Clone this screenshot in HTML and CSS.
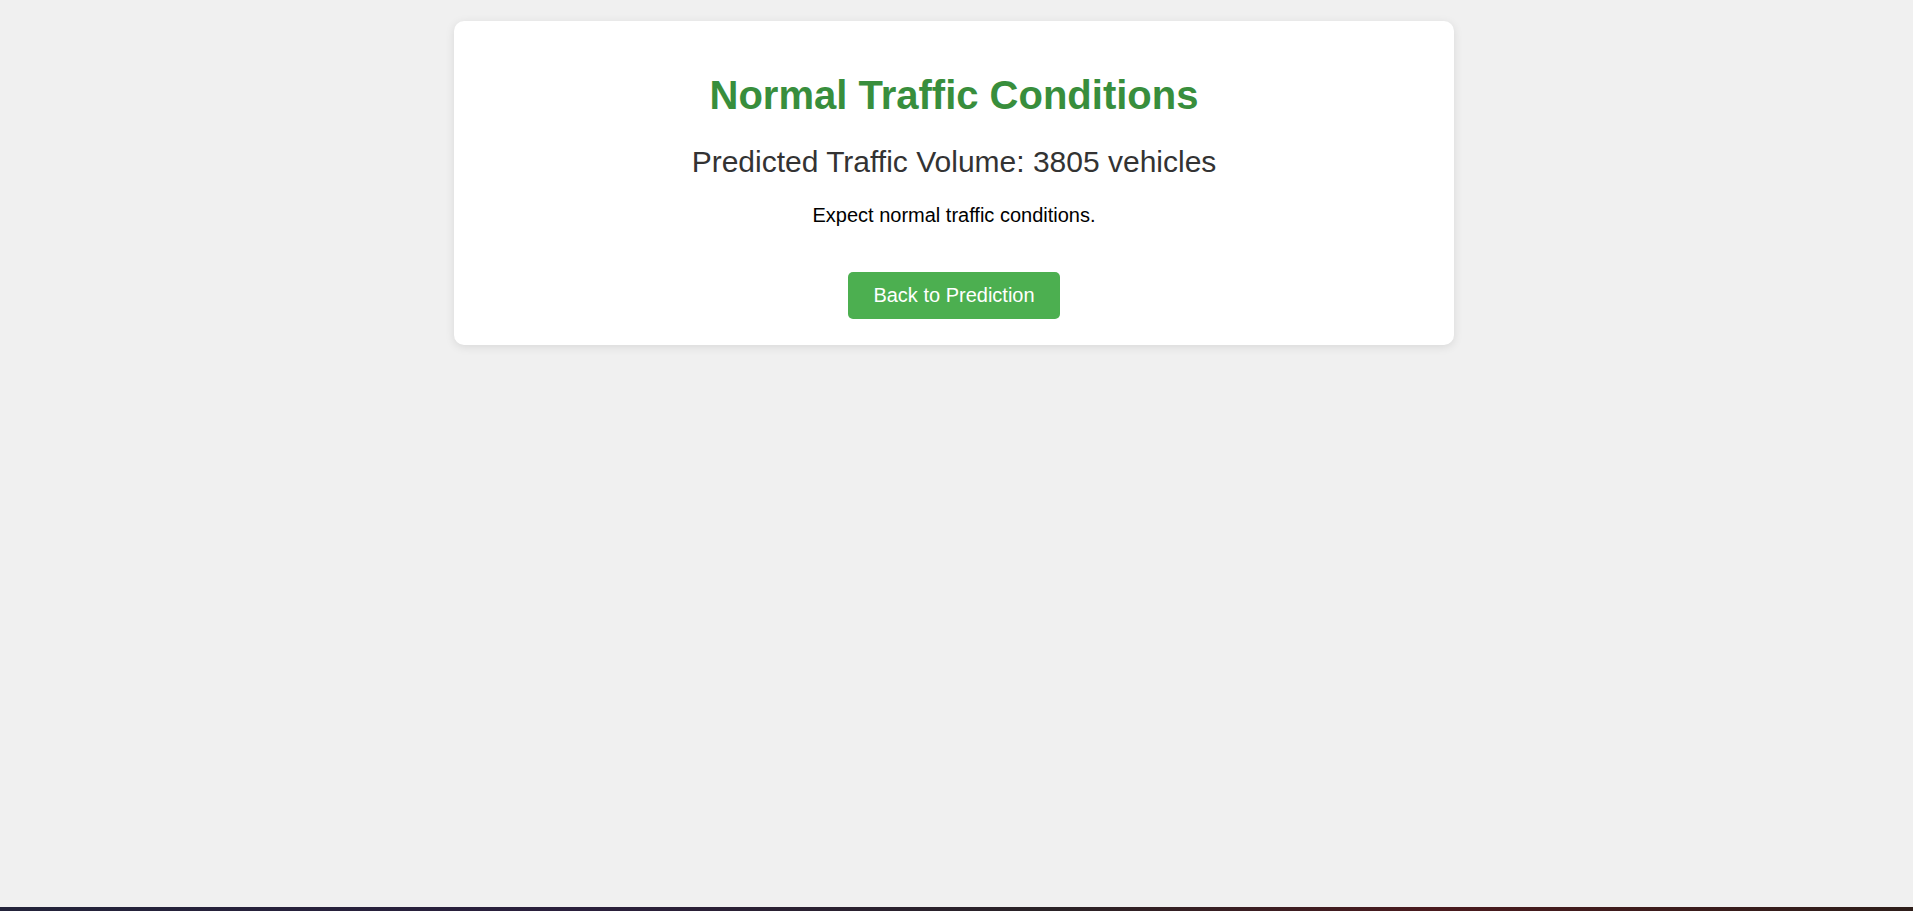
FILE: index.html
```html
<!DOCTYPE html>
<html lang="en">
<head>
<meta charset="utf-8">
<title>Traffic Prediction Result</title>
<link rel="stylesheet" href="styles.css">
</head>
<body>
<div class="page">
  <main class="card">
    <h1 class="title">Normal Traffic Conditions</h1>
    <h2 class="volume">Predicted Traffic Volume: 3805 vehicles</h2>
    <p class="note">Expect normal traffic conditions.</p>
    <a class="btn" href="#">Back to Prediction</a>
  </main>
  <div class="spacer"></div>
  <div class="taskbar"></div>
</div>
</body>
</html>
```

FILE: styles.css
```css
html, body {
  margin: 0;
  padding: 0;
  height: 100%;
}
body {
  background: #f0f0f0;
  font-family: "Liberation Sans", Arial, sans-serif;
}
.page {
  min-height: 100vh;
  display: flex;
  flex-direction: column;
  padding-right: 5px;
  box-sizing: border-box;
}
.card {
  width: 1000px;
  box-sizing: border-box;
  margin: 21px auto 0;
  background: #fff;
  border-radius: 10px;
  box-shadow: 0 2px 10px rgba(0, 0, 0, 0.1);
  padding: 25px 20px 26px;
  text-align: center;
  display: flex;
  flex-direction: column;
  align-items: center;
}
.title {
  margin: 26px 0 27px;
  font-size: 40px;
  font-weight: bold;
  color: #388e3c;
  line-height: 46px;
}
.volume {
  margin: 0 0 25px;
  font-size: 30px;
  font-weight: normal;
  color: #333;
  line-height: 34px;
}
.note {
  margin: 0 0 45px;
  font-size: 20px;
  color: #000;
  line-height: 23px;
}
.btn {
  display: inline-block;
  background: #4caf50;
  color: #fff;
  text-decoration: none;
  font-size: 20px;
  line-height: 23px;
  padding: 12px 25px;
  border-radius: 5px;
}
.spacer {
  flex: 1;
}
.taskbar {
  height: 4px;
  margin-right: -5px;
  background: linear-gradient(90deg, #23233a 0%, #2a1f3c 30%, #2a2226 55%, #4a1a1e 75%, #2e1e1a 100%);
}
```
